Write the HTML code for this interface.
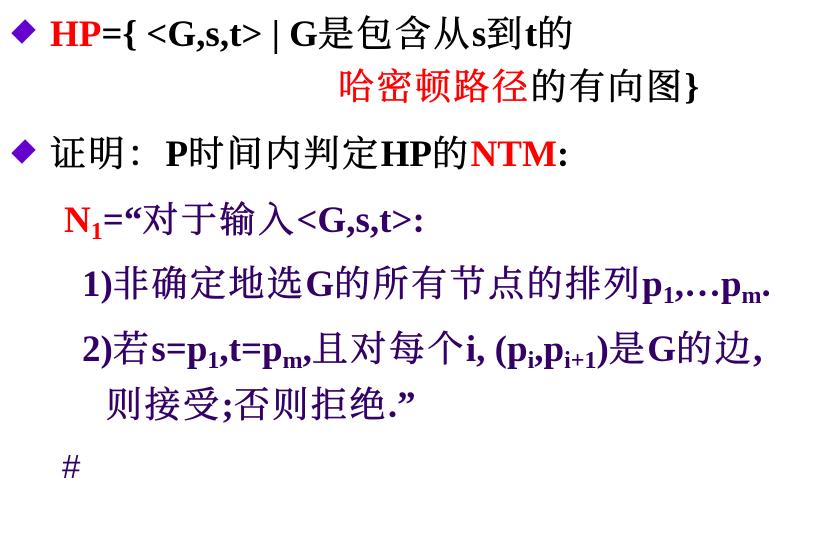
<!DOCTYPE html>
<html><head><meta charset="utf-8"><style>
body{margin:0;width:822px;height:550px;background:#fff;overflow:hidden;position:relative;font-family:"Liberation Serif","Noto Serif CJK SC",serif;font-size:37px;font-weight:bold;}
.l{position:absolute;white-space:nowrap;line-height:44px;}
.c{font-weight:normal;-webkit-text-stroke:0.6px currentColor;font-family:"Noto Serif CJK SC",serif;font-size:36px;letter-spacing:2.5px;}
.r{color:#ff0000}
.p{color:#330066}
.d{position:absolute;width:15px;height:15px;background:#6600cc;transform:rotate(45deg) scaleY(1.3);}
sub{font-size:24px;vertical-align:-7px;line-height:0}
</style></head><body>
<div class="d" style="left:16px;top:24px"></div>
<div class="l" style="left:50px;top:10px;color:#000"><span class="r">HP</span>={ &lt;G,s,t&gt; | G<span class="c">是包含从</span>s<span class="c">到</span>t<span class="c">的</span></div>
<div class="l" style="left:338px;top:63px;color:#000"><span class="c r">哈密顿路径</span><span class="c">的有向图</span>}</div>
<div class="d" style="left:16px;top:144px"></div>
<div class="l" style="left:50px;top:130px;color:#000"><span class="c">证明：</span>P<span class="c">时间内判定</span>HP<span class="c">的</span><span class="r">NTM</span>:</div>
<div class="l p" style="left:64px;top:196px"><span class="r">N<sub>1</sub></span>=“<span class="c">对于输入</span>&lt;G,s,t&gt;:</div>
<div class="l p" style="left:82px;top:260px">1)<span class="c">非确定地选</span>G<span class="c">的所有节点的排列</span>p<sub>1</sub>,…p<sub>m</sub>.</div>
<div class="l p" style="left:82px;top:325px">2)<span class="c">若</span>s=p<sub>1</sub>,t=p<sub>m</sub>,<span class="c">且对每个</span>i, (p<sub>i</sub>,p<sub>i+1</sub>)<span class="c">是</span>G<span class="c">的边</span>,</div>
<div class="l p" style="left:106px;top:381px"><span class="c">则接受</span>;<span class="c">否则拒绝</span>.”</div>
<div class="l p" style="left:62px;top:445px;font-weight:normal;font-family:'Liberation Sans',sans-serif;font-size:33px">#</div>
</body></html>
